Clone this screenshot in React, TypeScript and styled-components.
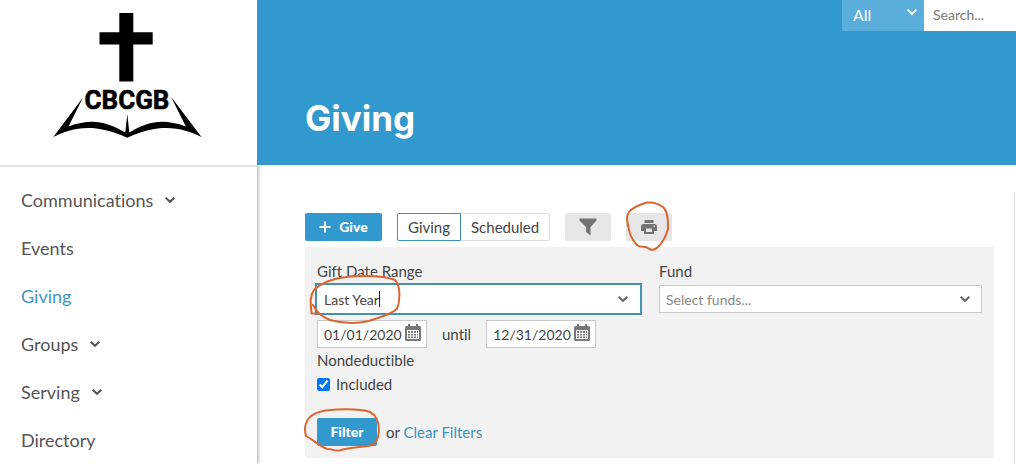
import React, { useState } from "react";
import styled, { createGlobalStyle, css } from "styled-components";

const blue = "#3299cf";
const line = "#c9c9c9";

const GlobalStyle = createGlobalStyle`
  *, *::before, *::after { box-sizing: border-box; }
  body {
    margin: 0;
    background: #fff;
    color: #444;
    font: 15px/20px Lato, "Liberation Sans", sans-serif;
    font-variant-ligatures: none;
  }
  button, input, select { font: inherit; font-variant-ligatures: none; color: inherit; margin: 0; }
`;

const Page = styled.div`
  display: flex;
  min-height: 100vh;
`;

const Sidebar = styled.aside`
  flex: 0 0 257px;
  box-shadow: 1px 0 4px rgba(0, 0, 0, 0.35);
`;

const LogoArea = styled.a`
  display: flex;
  justify-content: center;
  height: 167px;
  padding: 12px 2px 0 0;
  border-bottom: 2px solid #e4e4e4;
`;

const Nav = styled.nav`
  display: flex;
  flex-direction: column;
  padding: 9px 21px 0;
`;

const NavLink = styled.a<{ $active?: boolean }>`
  display: flex;
  align-items: center;
  gap: 11px;
  height: 48px;
  font-size: 18px;
  color: ${(p) => (p.$active ? "#4293c0" : "#555")};
  text-decoration: none;
`;

const Main = styled.main`
  flex: 1;
  min-width: 0;
  display: flex;
  flex-direction: column;
  position: relative;
`;

const Header = styled.header`
  display: flex;
  justify-content: space-between;
  align-items: flex-start;
  height: 165px;
  padding-left: 48px;
  background: ${blue};
`;

const Title = styled.h1`
  margin: 97px 0 0;
  color: #fff;
  font: bold 35px/42px Inter, sans-serif;
`;

const SearchBar = styled.form`
  display: flex;
  height: 31px;
`;

const Scope = styled.div`
  display: grid;
  align-items: center;
  width: 82px;
  background: #59aedb;
  color: #fff;
  > * { grid-area: 1 / 1; }
  > svg { justify-self: end; margin: 0 6px 8px 0; pointer-events: none; }
`;

const ScopeSelect = styled.select`
  appearance: none;
  width: 100%;
  height: 29px;
  margin-bottom: 2px;
  padding: 0 24px 0 11px;
  border: 0;
  background: none;
  font-size: 16px;
`;

const SearchInput = styled.input`
  width: 92px;
  height: 31px;
  padding: 0 9px 2px;
  border: 0;
  background: #fff;
  font-size: 14px;
  &::placeholder { color: #777; opacity: 1; }
`;

const Content = styled.section`
  flex: 1;
  margin-top: 27px;
  margin-right: 1px;
  padding: 21px 20px 6px 48px;
  border-right: 1px solid #ddd;
`;

const Toolbar = styled.div`
  display: flex;
  gap: 15px;
  margin-bottom: 6px;
`;

const Anchor = styled.div`
  position: relative;
  display: flex;
`;

const buttonBase = css`
  display: inline-flex;
  align-items: center;
  justify-content: center;
  height: 28px;
  padding: 0;
  border: 0;
  border-radius: 2px;
`;

const PrimaryButton = styled.button<{ $width: number }>`
  ${buttonBase}
  gap: 8px;
  width: ${(p) => p.$width}px;
  background: ${blue};
  color: #fff;
  font-size: 14px;
  font-weight: 900;
`;

const IconButton = styled.button`
  ${buttonBase}
  width: 46px;
  background: #e6e6e6;
  color: #737373;
`;

const Tabs = styled.div`
  display: flex;
`;

const Tab = styled.button<{ $active?: boolean }>`
  height: 28px;
  padding: 0 10px;
  border: 1px solid ${(p) => (p.$active ? "#3f8fb8" : "#ddd")};
  border-left-width: ${(p) => (p.$active ? 1 : 0)}px;
  border-radius: ${(p) => (p.$active ? "2px 0 0 2px" : "0 2px 2px 0")};
  background: #fff;
`;

const Panel = styled.form`
  padding: 14px 12px 12px;
  background: #f2f2f2;
`;

const Fields = styled.div`
  display: grid;
  grid-template-columns: 1fr 1fr;
  gap: 19px;
`;

const Field = styled.div`
  display: flex;
  flex-direction: column;
  gap: 4px;
  min-width: 0;
`;

const ComboBox = styled.div<{ $focused?: boolean }>`
  position: relative;
  display: flex;
  align-items: center;
  height: 28px;
  padding: 0 10px 0 6px;
  border: 1px solid ${(p) => (p.$focused ? "#fff" : line)};
  background: #fff;
  font-size: 14px;
  ${(p) => p.$focused && "outline: 2px solid #4590b3;"}
  > svg:first-of-type { margin-left: auto; flex: none; }
`;

const ComboInput = styled.input<{ $fit?: boolean }>`
  ${(p) => (p.$fit ? "field-sizing: content;" : "flex: 1; min-width: 0;")}
  height: 24px;
  padding: 0;
  border: 0;
  outline: 0;
  background: none;
  &::placeholder { color: #888; opacity: 1; }
`;

const Caret = styled.span`
  width: 1px;
  height: 16px;
  background: #222;
`;

const DateRow = styled.div`
  display: flex;
  align-items: center;
  gap: 15px;
  margin: 7px 0 2px;
`;

const DateBox = styled.div`
  display: flex;
  align-items: center;
  justify-content: space-between;
  width: 110px;
  height: 28px;
  padding: 0 5px 0 6px;
  border: 1px solid ${line};
  background: #fff;
`;

const DateInput = styled.input`
  width: 80px;
  height: 24px;
  padding: 0;
  border: 0;
  background: none;
  font-size: 14px;
`;

const PickerButton = styled.button`
  display: flex;
  padding: 0 0 3px;
  border: 0;
  background: none;
  color: #777;
`;

const CheckRow = styled.fieldset`
  margin: 0;
  padding: 0;
  border: 0;
`;

const Legend = styled.legend`
  padding: 0;
  margin-bottom: 4px;
`;

const CheckLabel = styled.label`
  display: flex;
  align-items: center;
  gap: 6px;
`;

const Check = styled.input`
  && { width: 13px; height: 13px; }
`;

const Actions = styled.div`
  display: flex;
  align-items: center;
  margin-top: 24px;
`;

const OrText = styled.span`
  margin-left: 9px;
`;

const TextLink = styled.a`
  color: #3a93bf;
  text-decoration: none;
`;

const Mark = styled.svg<{ $x: number; $y: number }>`
  position: absolute;
  left: ${(p) => p.$x}px;
  top: ${(p) => p.$y}px;
  z-index: 2;
  fill: none;
  stroke: #dd6530;
  stroke-width: 2;
  stroke-linecap: round;
  stroke-linejoin: round;
  pointer-events: none;
`;

function Chevron({ color = "#555" }: { color?: string }) {
  return (
    <svg width="12" height="8" viewBox="0 0 12 8" fill="none" stroke={color} strokeWidth="2" aria-hidden="true">
      <path d="M1.7 1.7 6 5.8 10.3 1.7" />
    </svg>
  );
}

function Logo() {
  return (
    <svg width="152" height="128" viewBox="52 12 152 128" role="img" aria-label="CBCGB">
      <path d="M119.3 13h14v19.300h19.400v12.200h-19.400v37h-14v-37H99.500V32.300h19.800z" />
      <text x="127" y="109" textAnchor="middle" fontFamily="Roboto, 'Liberation Sans', sans-serif" fontWeight="700" fontSize="26" stroke="#000" strokeWidth=".6">
        CBCGB
      </text>
      <path d="M83 97.500 53.300 137C71 129 91 121.500 127.300 137.800 162 121.500 184 129 201.500 137L171 96.800 185.800 126.500C163 118.500 149 121 129.300 132.500L127.300 114 125.300 132.500C105 121 91 118.500 68.500 126.500Z" />
    </svg>
  );
}

function CalendarIcon() {
  return (
    <svg width="16" height="17" viewBox="0 0 16 17" aria-hidden="true">
      <path fill="currentColor" fillRule="evenodd" d="M3 0h2v2h6V0h2v2h1.500Q16 2 16 3.500v12Q16 17 14.500 17h-13Q0 17 0 15.500v-12Q0 2 1.500 2H3zM2 6v9h12V6z" />
      <path fill="currentColor" d="M3 7h2v2H3zm3 0h2v2H6zm3 0h2v2H9zm3 0h1v2h-1zM3 10h2v1.500H3zm3 0h2v1.500H6zm3 0h2v1.500H9zm3 0h1v1.500h-1zM3 12.500h2V14H3zm3 0h2V14H6zm3 0h2V14H9zm3 0h1V14h-1z" />
    </svg>
  );
}

const navItems = [
  { label: "Communications", menu: true },
  { label: "Events" },
  { label: "Giving", active: true },
  { label: "Groups", menu: true },
  { label: "Serving", menu: true },
  { label: "Directory" },
];

function DateField({ label, initial }: { label: string; initial: string }) {
  const [value, setValue] = useState(initial);
  return (
    <DateBox>
      <DateInput aria-label={label} value={value} onChange={(e) => setValue(e.target.value)} />
      <PickerButton type="button" aria-label={`Pick ${label.toLowerCase()}`}>
        <CalendarIcon />
      </PickerButton>
    </DateBox>
  );
}

export default function App() {
  const [range, setRange] = useState("Last Year");
  return (
    <>
      <GlobalStyle />
      <Page>
        <Sidebar>
          <LogoArea href="#home">
            <Logo />
          </LogoArea>
          <Nav>
            {navItems.map((item) => (
              <NavLink key={item.label} href={`#${item.label.toLowerCase()}`} $active={item.active}>
                {item.label}
                {item.menu && <Chevron />}
              </NavLink>
            ))}
          </Nav>
        </Sidebar>
        <Main>
          <Header>
            <Title>Giving</Title>
            <SearchBar role="search">
              <Scope>
                <ScopeSelect aria-label="Search in">
                  <option>All</option>
                </ScopeSelect>
                <Chevron color="#fff" />
              </Scope>
              <SearchInput type="text" aria-label="Search" placeholder="Search..." />
            </SearchBar>
          </Header>
          <Content>
            <Toolbar>
              <PrimaryButton type="button" $width={77}>
                <svg width="12" height="12" viewBox="0 0 12 12" stroke="currentColor" strokeWidth="2" aria-hidden="true">
                  <path d="M6 .5v11M.5 6h11" />
                </svg>
                Give
              </PrimaryButton>
              <Tabs>
                <Tab type="button" $active>Giving</Tab>
                <Tab type="button">Scheduled</Tab>
              </Tabs>
              <IconButton type="button" aria-label="Filters">
                <svg width="18" height="18" viewBox="0 0 18 18" fill="currentColor" aria-hidden="true">
                  <path d="M.5.5h17v2L11.500 9v8.500L7 14V9L.5 2.500z" />
                </svg>
              </IconButton>
              <Anchor>
                <IconButton type="button" aria-label="Print">
                  <svg width="16" height="16" viewBox="0 0 16 16" fill="currentColor" aria-hidden="true">
                    <path d="M3.500 1h9v3h-9z" />
                    <path fillRule="evenodd" d="M2.500 5h11Q16 5 16 7.500V12h-3v3H3v-3H0V7.500Q0 5 2.500 5zM5 9.500V13h6V9.500zM12.500 6.500v1.500H14V6.500z" />
                  </svg>
                </IconButton>
                <Mark $x={-2} $y={-13} width="48" height="54" viewBox="625 200 48 54" aria-hidden="true">
                  <path d="M629 226C628 220 627 216 630 212 634 207 643 204 648 202.500 655 202 660 204 664 207 669 212 669 220 669 229 667 236 664 242 659 247 656 250 652 251 648 247.500 645 246 641 248 638 245 634 241 630 235 629 224" />
                </Mark>
              </Anchor>
            </Toolbar>
            <Panel>
              <Fields>
                <Field>
                  <label htmlFor="range">Gift Date Range</label>
                  <ComboBox $focused>
                    <ComboInput id="range" role="combobox" aria-expanded="false" $fit value={range} onChange={(e) => setRange(e.target.value)} />
                    <Caret />
                    <Chevron color="#666" />
                    <Mark $x={-10} $y={-12} width="94" height="52" viewBox="308 274 94 52" aria-hidden="true">
                      <path d="M319 313.500 311.500 313.500C311 305 309 297 314 290 321 283 334 278 346 277 363 275 385 276 395 280 401 286 400 302 397 309 390 315 377 318 369 321 356 324 341 323 330 320 323 317 316 311 313 305" />
                    </Mark>
                  </ComboBox>
                </Field>
                <Field>
                  <label htmlFor="fund">Fund</label>
                  <ComboBox>
                    <ComboInput id="fund" role="combobox" aria-expanded="false" placeholder="Select funds..." />
                    <Chevron color="#666" />
                  </ComboBox>
                </Field>
              </Fields>
              <DateRow>
                <DateField label="Start date" initial="01/01/2020" />
                <span>until</span>
                <DateField label="End date" initial="12/31/2020" />
              </DateRow>
              <CheckRow>
                <Legend>Nondeductible</Legend>
                <CheckLabel>
                  <Check type="checkbox" defaultChecked />
                  Included
                </CheckLabel>
              </CheckRow>
              <Actions>
                <Anchor>
                  <PrimaryButton type="button" $width={60}>Filter</PrimaryButton>
                  <Mark $x={-15} $y={-12} width="80" height="48" viewBox="302 406 80 48" aria-hidden="true">
                    <path d="M306 436C304 429 305 423 309 418 314 412 325 410 337 409.500 350 409 362 409 370 412 376 415 379 422 379 431 378 438 377 443 372 445 366 447 349 447 341 450 336 452 333 449 328 449 322 448 315 441 306 436" />
                  </Mark>
                </Anchor>
                <OrText>
                  or <TextLink href="#clear">Clear Filters</TextLink>
                </OrText>
              </Actions>
            </Panel>
          </Content>
        </Main>
      </Page>
    </>
  );
}
